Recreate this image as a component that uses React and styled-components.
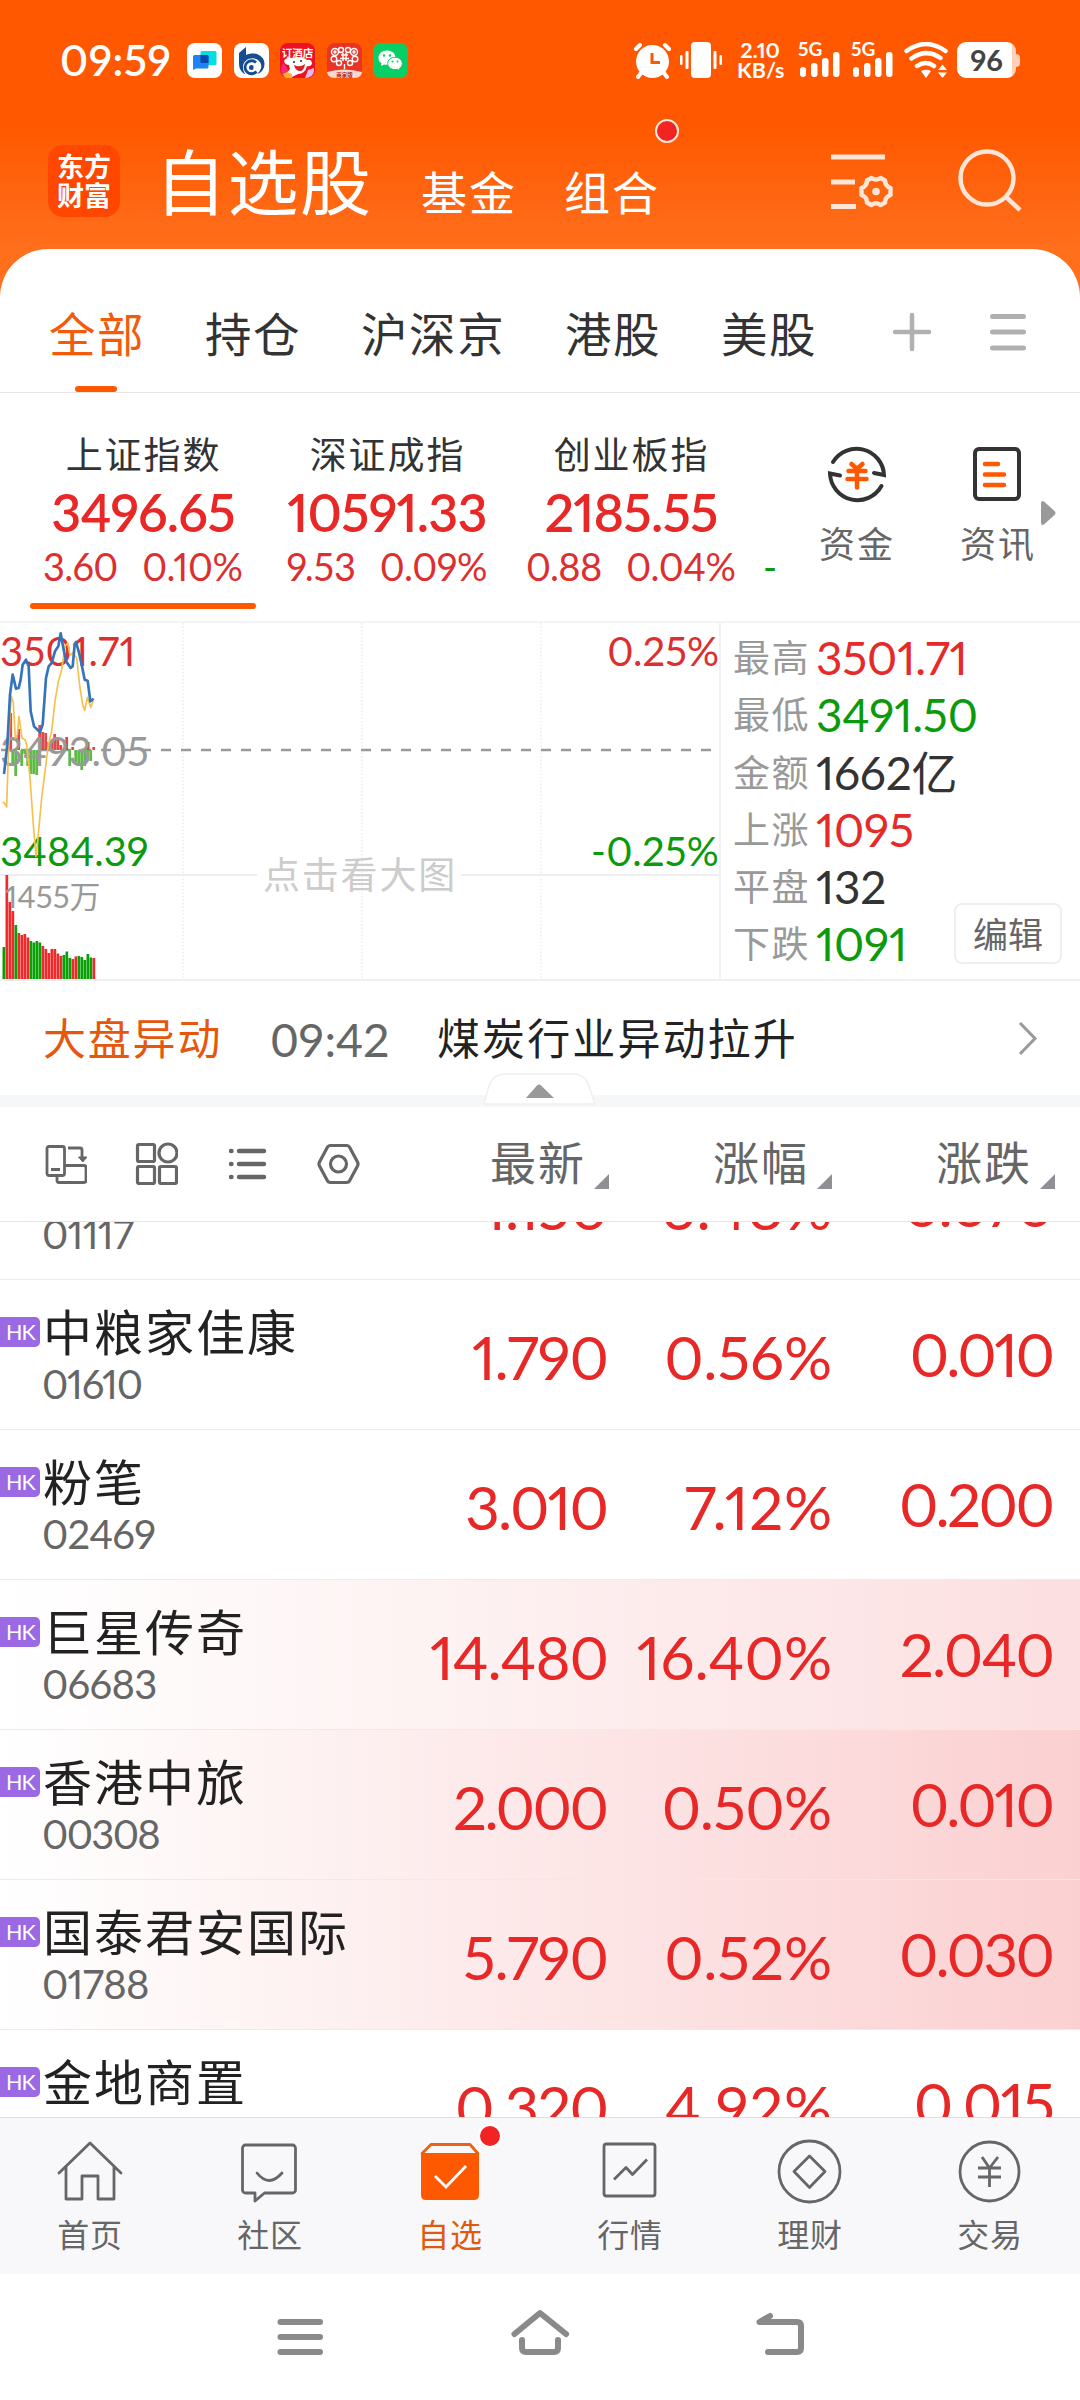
import React from 'react'
import styled, { createGlobalStyle } from 'styled-components'

const GlobalStyle = createGlobalStyle`
  * {
    box-sizing: border-box;
  }
  body {
    margin: 0;
    background: #fff;
  }
  svg {
    display: block;
    flex: none;
  }
`

const RED = '#e82827'
const GREEN = '#0b9a0b'
const ORANGE = '#fe5800'
const GREY = '#666'

const Screen = styled.div`
  display: flex;
  flex-direction: column;
  width: 1080px;
  height: 2400px;
  overflow: hidden;
  background: linear-gradient(#ff5800 125px, #ff6f1c 249px, #ff6f1c 300px, #fff 300px);
  font-family: Lato, 'Noto Sans CJK SC', sans-serif;
  font-variant-numeric: proportional-nums;
  color: #333;
  white-space: nowrap;
`

// the proportional zero is wide, so numbers with many zeros are set tighter
const spacing = text => {
  const zeros = text.split('0').length - 1
  return -0.012 * zeros + (text.endsWith('%') ? 0.012 : -0.006)
}

const Digits = styled.span`
  letter-spacing: ${p => spacing(p.children)}em;
  margin-right: ${p => -spacing(p.children)}em;
`

/* status bar */

const StatusBar = styled.div`
  display: flex;
  align-items: center;
  flex: none;
  height: 120px;
  padding-left: 60px;
  color: #fff;
`
const Clock = styled.div`
  width: 127px;
  font-size: 42.5px;
  font-weight: 600;
  letter-spacing: 0.5px;
  line-height: 42px;
`
const AppIcons = styled.div`
  display: flex;
  gap: 11.6px;
  width: 447px;
`
const Speed = styled.div`
  width: 46px;
  margin: 0 15px 0 14px;
  font-size: 21.5px;
  font-weight: 700;
  line-height: 20px;
  text-align: center;
`
const Signal = styled.div`
  width: 53px;
  height: 36px;
  font-size: 19px;
  font-weight: 700;
  line-height: 14px;
`
const Bars = styled.svg`
  margin: -4px 0 0 2px;
`
const Battery = styled.div`
  display: flex;
  align-items: center;
  margin-left: 9px;
`
const Charge = styled.div`
  width: 59px;
  height: 36px;
  border-radius: 9px;
  background: linear-gradient(90deg, #fff 55px, #ffd0b8 55px);
  color: #444;
  font-size: 29px;
  font-weight: 700;
  line-height: 35px;
  text-align: center;
`
const Tip = styled.div`
  width: 4px;
  height: 13px;
  border-radius: 0 4px 4px 0;
  background: #ffd0b8;
`

/* header */

const Header = styled.div`
  display: flex;
  flex: none;
  height: 129px;
  padding-left: 48px;
  color: #fff;
`
const Logo = styled.div`
  width: 72px;
  height: 72px;
  margin: 25px 35px 0 0;
  padding: 7px 0 0 9px;
  border-radius: 15px;
  background: #ff4700;
  font-size: 27px;
  font-weight: 700;
  line-height: 29px;
`
const Title = styled.h1`
  width: 266px;
  margin: 21px 0 0;
  font-size: 71px;
  font-weight: 400;
  letter-spacing: 1.5px;
  line-height: 82px;
`
const HeaderLink = styled.div`
  position: relative;
  width: 143px;
  padding-top: 43px;
  font-size: 46px;
  letter-spacing: 2px;
  line-height: 60px;
`
const Dot = styled.span`
  position: absolute;
  top: ${p => p.$top}px;
  left: ${p => p.$left}px;
  width: 24px;
  height: 24px;
  border: 2px solid ${p => p.$ring};
  border-radius: 50%;
  background: #f22323;
`
const HeaderIcons = styled.div`
  display: flex;
  gap: 64px;
  margin: 28px 0 0 121px;
`

/* group tabs */

const Tabs = styled.div`
  display: flex;
  flex: none;
  height: 144px;
  padding-left: 49px;
  border-bottom: 1px solid #e4e6e6;
  border-radius: 48px 48px 0 0;
  background: #fff;
`
const Tab = styled.div`
  display: flex;
  flex-direction: column;
  justify-content: space-between;
  width: ${p => p.$width}px;
  padding-top: 55px;
  color: ${p => (p.$active ? '#f25a0c' : '#333')};
  font-size: 46.5px;
  letter-spacing: 1.6px;
  line-height: 60px;
`
const TabMark = styled.div`
  width: 42px;
  height: 6px;
  margin-left: 26px;
  border-radius: 3px;
  background: ${ORANGE};
`
const TabIcons = styled.div`
  display: flex;
  gap: 58px;
  padding: 63px 0 0 1px;
`

/* index strip */

const Indexes = styled.div`
  display: flex;
  flex: none;
  height: 228px;
  padding-left: 30px;
  background: #fff;
`
const Index = styled.div`
  display: flex;
  flex-direction: column;
  align-items: center;
  width: ${p => p.$width}px;
  padding-top: 38px;
`
const IndexName = styled.div`
  padding-left: 1px;
  font-size: 37px;
  letter-spacing: 1.9px;
  line-height: 48px;
`
const IndexValue = styled.div`
  color: ${RED};
  font-size: 52px;
  font-weight: 600;
  letter-spacing: -0.8px;
  line-height: 66px;
`
const IndexChange = styled.div`
  display: flex;
  gap: 24px;
  color: #dc2f2f;
  font-size: 38px;
  line-height: 42px;
`
const IndexMark = styled.div`
  width: 226px;
  height: 6px;
  margin-top: 16px;
  border-radius: 3px;
  background: ${ORANGE};
`
const NextIndex = styled.div`
  width: 74px;
  padding: 152px 0 0 19px;
  color: ${GREEN};
  font-size: 38px;
  line-height: 42px;
`
const Shortcut = styled.div`
  display: flex;
  flex-direction: column;
  align-items: center;
  width: 78px;
  margin-right: ${p => p.$gap}px;
  padding-top: 51px;
  color: ${GREY};
  font-size: 36px;
  letter-spacing: 2px;
  line-height: 48px;
  svg {
    margin-bottom: 16px;
  }
`
const Scroll = styled.svg`
  margin: 107px 0 0 3px;
`

/* market chart */

const Market = styled.div`
  display: flex;
  flex: none;
  height: 360px;
  border-top: 2px solid #f3f4f4;
  border-bottom: 2px solid #f0f0f0;
  background: #fff;
`
const Chart = styled.div`
  position: relative;
  width: 721px;
  border-right: 2px solid #f1f1f1;
`
const ChartText = styled.span`
  position: absolute;
  top: ${p => p.$top}px;
  ${p => (p.$right ? 'right: 0;' : `left: ${p.$left || 0}px;`)}
  color: ${p => p.$color};
  font-size: ${p => p.$size || 40}px;
  line-height: 44px;
  letter-spacing: ${p => p.$ls || 0}px;
`
const Overlay = styled.svg`
  position: absolute;
  top: 0;
  left: 0;
`
const Stats = styled.div`
  width: 233px;
  padding: 6px 0 0 12px;
`
const Stat = styled.div`
  display: flex;
  gap: 8px;
  color: ${p => p.$color};
  font-size: 46px;
  letter-spacing: -0.2px;
  line-height: 57.3px;
`
const StatLabel = styled.span`
  width: 75px;
  color: #999;
  font-size: 37px;
  letter-spacing: 1.4px;
`
const Edit = styled.div`
  align-self: flex-end;
  width: 108px;
  height: 61px;
  margin-bottom: 15px;
  border: 2px solid #efefef;
  border-radius: 8px;
  color: ${GREY};
  font-size: 35px;
  line-height: 58px;
  text-align: center;
`

/* news */

const News = styled.div`
  display: flex;
  flex: none;
  height: 114px;
  padding: 30px 0 0 43px;
  background: #fff;
  color: #222;
  font-size: 43px;
  letter-spacing: 1.8px;
  line-height: 56px;
`
const NewsTag = styled.span`
  width: 228px;
  color: #e5570c;
`
const NewsTime = styled.span`
  width: 166px;
  color: ${GREY};
  font-size: 46.5px;
  font-variant-numeric: tabular-nums;
  letter-spacing: -0.2px;
`
const NewsTitle = styled.span`
  width: 581px;
  letter-spacing: 2.1px;
`
const Divider = styled.div`
  position: relative;
  flex: none;
  height: 12px;
  background: #f5f7f9;
`
const Collapse = styled.svg`
  position: absolute;
  top: -23px;
  left: 483px;
`

/* stock list */

const Columns = `
  display: grid;
  grid-template-columns: 386px 223px 223px 223px;
`
const ListHead = styled.div`
  ${Columns}
  flex: none;
  height: 115px;
  border-bottom: 1px solid #e6e6e6;
  background: #fff;
`
const ViewIcons = styled.div`
  display: flex;
  gap: 47px;
  padding: 34px 0 0 43px;
`
const HeadCell = styled.div`
  display: flex;
  justify-content: flex-end;
  gap: 8px;
  padding-top: 26px;
  color: ${GREY};
  font-size: 46px;
  letter-spacing: 2px;
  line-height: 60px;
  svg {
    margin-top: 41px;
  }
`
const List = styled.div`
  flex: none;
  height: 895px;
  overflow: hidden;
  background: #fff;
`
const Rows = styled.div`
  margin-top: -92px;
`
const Row = styled.div`
  ${Columns}
  height: 150px;
  padding-top: 22px;
  border-bottom: 1px solid #ebebeb;
  background: linear-gradient(90deg, #fff, ${p => p.$tint || '#fff'});
`
const NameLine = styled.div`
  display: flex;
  align-items: center;
  gap: 3px;
  color: #222;
  font-size: 49px;
  letter-spacing: 2px;
  line-height: 60px;
`
const Badge = styled.span`
  width: 40px;
  height: 30px;
  padding-left: 6px;
  border-radius: 0 5px 5px 0;
  background: #9b69e4;
  color: #fff;
  font-size: 21.5px;
  letter-spacing: -1px;
  line-height: 30px;
`
const Code = styled.div`
  padding-left: 42px;
  color: ${GREY};
  font-size: 40px;
  line-height: 45px;
`
const Value = styled.div`
  padding-top: ${p => (p.$last ? 16 : 19)}px;
  color: ${RED};
  font-size: 60px;
  line-height: 72px;
  text-align: right;
`

/* bottom bars */

const TabBar = styled.div`
  display: flex;
  flex: none;
  height: 157px;
  border-top: 1px solid #dfdfe2;
  background: #f8f8fa;
`
const TabItem = styled.div`
  position: relative;
  display: flex;
  flex-direction: column;
  align-items: center;
  width: 180px;
  padding-top: 20px;
  color: ${p => (p.$active ? '#e0590f' : GREY)};
  font-size: 32px;
  letter-spacing: 0.8px;
  line-height: 48px;
  svg {
    margin-bottom: 7px;
  }
`
const SystemBar = styled.div`
  display: flex;
  flex: 1;
  gap: 180px;
  padding: 31px 0 0 270px;
  background: #fff;
`

const indexes = [
  { name: '上证指数', value: '3496.65', change: '3.60', pct: '0.10%', width: 226, active: true },
  { name: '深证成指', value: '10591.33', change: '9.53', pct: '0.09%', width: 262 },
  { name: '创业板指', value: '2185.55', change: '0.88', pct: '0.04%', width: 226 }
]

const stats = [
  ['最高', '3501.71', '#e52a2a'],
  ['最低', '3491.50', GREEN],
  ['金额', '1662亿', '#333'],
  ['上涨', '1095', '#e52a2a'],
  ['平盘', '132', '#333'],
  ['下跌', '1091', GREEN]
]

const stocks = [
  { name: '现代牧业', code: '01117', price: '1.150', pct: '6.48%', diff: '0.070' },
  { name: '中粮家佳康', code: '01610', price: '1.790', pct: '0.56%', diff: '0.010' },
  { name: '粉笔', code: '02469', price: '3.010', pct: '7.12%', diff: '0.200' },
  { name: '巨星传奇', code: '06683', price: '14.480', pct: '16.40%', diff: '2.040', tint: '#fcdfe0' },
  { name: '香港中旅', code: '00308', price: '2.000', pct: '0.50%', diff: '0.010', tint: '#fbd0d1' },
  { name: '国泰君安国际', code: '01788', price: '5.790', pct: '0.52%', diff: '0.030', tint: '#fbd0d1' },
  { name: '金地商置', code: '00535', price: '0.320', pct: '4.92%', diff: '0.015' }
]

// bar tops measured down from the top of the chart
const volumes = [
  ['g', 325], ['r', 253], ['r', 280], ['r', 289], ['g', 303], ['r', 311], ['r', 313], ['r', 312],
  ['r', 315.5], ['g', 319], ['g', 320.5], ['g', 319], ['g', 320.5], ['r', 324], ['r', 327], ['r', 331],
  ['r', 327], ['r', 327], ['r', 331.5], ['r', 334], ['g', 333], ['g', 329.5], ['g', 336], ['r', 337],
  ['r', 334.5], ['g', 334], ['g', 335], ['g', 338], ['g', 332], ['g', 335.5], ['r', 336]
]

// [x, height], negative goes up from the baseline
const flows = [
  [9.3, -37], [14.3, 26], [11.3, 14], [17.3, -21], [20.3, 16], [23.3, 4], [26.3, 16], [29.3, 24], [32.3, 24], [35.3, 25],
  [38.3, -25], [41.3, -18], [44.3, -17], [47.3, -8], [50.3, -8], [53.3, -16], [56.3, -11], [59.3, -5],
  [65.3, -13], [68.3, 16], [71.3, -3], [74.3, 12], [77.3, 16], [80.3, 20], [83.3, 16], [86.3, 10], [86.8, -8], [89.3, 11], [92.3, -3]
]

const AppIcon = ({ bg, children }) => (
  <svg width="35" height="35" viewBox="0 0 35 35">
    <rect width="35" height="35" rx="8" fill={bg} />
    {children}
  </svg>
)

const SignalBars = ({ children }) => (
  <Signal>
    {children}
    <Bars width="42" height="26" viewBox="0 0 42 26" fill="#fff">
      <rect x="0" y="15" width="6" height="10" rx="3" />
      <rect x="11" y="11" width="6.5" height="14" rx="3" />
      <rect x="22" y="6" width="6.5" height="19" rx="3" />
      <rect x="33" y="0" width="6.5" height="25" rx="3" />
    </Bars>
  </Signal>
)

const Status = () => (
  <StatusBar>
    <Clock>09:59</Clock>
    <AppIcons>
      <AppIcon bg="#fff">
        <rect x="13.5" y="8" width="16" height="14" rx="1.5" fill="#06dde0" />
        <path d="M7 12h13a1.5 1.5 0 0 1 1.5 1.5V24a1.5 1.5 0 0 1-1.5 1.5H9L6 27V13.5Z" fill="#1d83f7" />
        <path d="M13.5 12h6.5a1.5 1.5 0 0 1 1.5 1.5V20H15a1.5 1.5 0 0 1-1.5-1.5Z" fill="#0749ac" />
      </AppIcon>
      <AppIcon bg="#fff">
        <path d="M5 10l7-6v8c8-4 18.500 0 18.500 9-.2 5-3 9-7.500 10 5-4 6-10 1-14-6-4-14.500-.5-15 6.500-.1 3 .8 5.500 2.500 8C7 29 5 26 5 20Z" fill="#164c94" />
        <path d="M22 19.500a6.500 6.500 0 1 0 .5 9" fill="none" stroke="#164c94" strokeWidth="2.800" />
        <circle cx="17.500" cy="24.500" r="2.500" fill="#164c94" />
        <path d="M19.500 23h4v3.500h-4Z" fill="#fff" />
      </AppIcon>
      <AppIcon bg="#ee1122">
        <path d="M1 27Q1 22 4 20L9 29 6 34Q1 33 1 27Z" fill="#f22b78" />
        <path d="M4 18Q6 14 13 15 22 12 27 17q5-1 5 4-2 3-5 2-2 8-9 8l-6 3-6-3 4-5-1-4Q5 22 4 18Z" fill="#fff" />
        <text x="17.500" y="14" fill="#fff" fontSize="10.500" fontWeight="700" textAnchor="middle">订酒店</text>
        <path d="M14 22q6 3 11-1-1 8-6 7-4-1-5-6Z" fill="#d9202a" />
        <circle cx="14" cy="19" r="1" fill="#222" />
        <circle cx="21" cy="18" r="1" fill="#222" />
        <path d="M3 31l4-2 5 2v4H7Q4 35 3 31Z" fill="#ffb020" />
        <path d="M25 35l3-8 6-2v3q-1 7-9 7Z" fill="#e9b8ea" />
      </AppIcon>
      <AppIcon bg="#e83327">
        <g fill="none" stroke="#fff" strokeWidth="1.400">
          <circle cx="8" cy="9" r="3.500" />
          <circle cx="8" cy="9" r="1" />
          <circle cx="14" cy="7" r="2.500" />
          <circle cx="21" cy="7" r="2.500" />
          <circle cx="27" cy="9" r="3.500" />
          <circle cx="27" cy="9" r="1" />
          <circle cx="7" cy="16" r="2.800" />
          <circle cx="28" cy="16" r="2.800" />
          <circle cx="12" cy="20" r="2.500" />
          <circle cx="23" cy="20" r="2.500" />
          <path d="M14 12h7M13 15.500h9M16 10v8M19 10v8M17.500 21v5" />
        </g>
        <path d="M0 29Q17 24 35 29v0Q34 35 27 35H8Q1 35 0 29Z" fill="#fbd9d3" />
        <text x="17.500" y="33.500" fill="#b3261c" fontSize="5.500" fontWeight="700" textAnchor="middle">商家版</text>
      </AppIcon>
      <AppIcon bg="#07cf63">
        <path d="M14 7.500c-5 0-8.500 3.200-8.500 7.200 0 2.300 1.100 4.200 3 5.500L8 23l3-1.600c1 .3 2 .4 3 .4 5 0 8.500-3 8.500-7.100s-3.500-7.200-8.500-7.200Z" fill="#fff" />
        <path d="M22 14.300c-4.300 0-7.300 2.700-7.300 6.200 0 3.400 3 6.100 7.300 6.100.9 0 1.700-.1 2.500-.3l2.500 1.400-.5-2.300c1.800-1.200 2.800-2.900 2.800-4.900 0-3.500-3-6.200-7.300-6.200Z" fill="#fff" stroke="#07cf63" />
        <g fill="#07cf63">
          <circle cx="11" cy="12.500" r="1.200" />
          <circle cx="17" cy="12.500" r="1.200" />
          <circle cx="19.500" cy="18.500" r="1" />
          <circle cx="24.500" cy="18.500" r="1" />
        </g>
      </AppIcon>
    </AppIcons>
    <svg width="37" height="37" viewBox="0 0 37 37" fill="none" stroke="#fff" strokeWidth="4" strokeLinecap="round">
      <circle cx="18.500" cy="19.500" r="16.500" fill="#fff" stroke="none" />
      <path d="M2 7l4-4M35 7l-4-4M7 31l-3 4M30 31l3 4" />
      <path d="M18 11v9.500h8" stroke={ORANGE} strokeWidth="3" strokeLinecap="butt" />
    </svg>
    <svg width="52" height="36" viewBox="-9 0 52 36" fill="#fff">
      <rect x="11" y="0" width="20" height="36" rx="4" />
      <rect x="5.500" y="9" width="3" height="18" rx="1" />
      <rect x="0" y="13" width="2.500" height="10" rx="1" />
      <rect x="33.500" y="9" width="3" height="18" rx="1" />
      <rect x="39.500" y="13" width="2.500" height="10" rx="1" />
    </svg>
    <Speed>2.10<br />KB/s</Speed>
    <SignalBars>5G</SignalBars>
    <SignalBars>5G</SignalBars>
    <svg width="44" height="36" viewBox="0 0 44 36" fill="none" stroke="#fff" strokeWidth="4.500" strokeLinecap="round">
      <path d="M2.500 9Q22-5 41.500 9M7.500 16.500Q22 6 36.500 16M13 24q9-6 17 0" />
      <path d="M17 29q5-2.500 10 0l-5 7Z M34 28l4.500-5.500L43 28ZM34 30.500l4.500 5.500 4.500-5.500Z" fill="#fff" stroke="none" />
    </svg>
    <Battery>
      <Charge>96</Charge>
      <Tip />
    </Battery>
  </StatusBar>
)

const TopHeader = () => (
  <Header>
    <Logo>东方<br />财富</Logo>
    <Title>自选股</Title>
    <HeaderLink>基金</HeaderLink>
    <HeaderLink>
      组合
      <Dot $top={-1} $left={91} $ring="#ffe9dd" />
    </HeaderLink>
    <HeaderIcons>
      <svg width="66" height="66" viewBox="0 0 66 66" fill="none" stroke="#ffe5d6" strokeWidth="5">
        <path d="M3 9h54M3 34h24M3 58.500h25" />
        <path d="M43.500 30q4.500 3 9 0l4.500 2.500q0 5.500 5.500 7.500v7q-5.500 2-5.500 7.500l-4.500 2.500q-4.500-3.500-9 0l-4.500-2.500q0-5.500-5.500-7.500v-7q5.500-2 5.500-7.500Z" strokeWidth="4.500" strokeLinejoin="round" />
        <circle cx="48" cy="43.500" r="3.800" fill="#ffe5d6" stroke="none" />
      </svg>
      <svg width="66" height="66" viewBox="0 0 66 66" fill="none" stroke="#ffe5d6" strokeWidth="4.500">
        <circle cx="29" cy="30" r="26.500" />
        <path d="M48 49l14 13" />
      </svg>
    </HeaderIcons>
  </Header>
)

const GroupTabs = () => (
  <Tabs>
    <Tab $width={156} $active>
      全部
      <TabMark />
    </Tab>
    <Tab $width={156}>持仓</Tab>
    <Tab $width={204}>沪深京</Tab>
    <Tab $width={156}>港股</Tab>
    <Tab $width={170}>美股</Tab>
    <TabIcons>
      <svg width="40" height="40" viewBox="0 0 40 40" stroke="#b0b0b0" strokeWidth="4.500" strokeLinecap="round">
        <path d="M3 20h34M20 3v34" />
      </svg>
      <svg width="40" height="40" viewBox="0 0 40 40" stroke="#b0b0b0" strokeWidth="5" strokeLinecap="round">
        <path d="M2.500 4.500h31M2.500 20h31M2.500 36h31" />
      </svg>
    </TabIcons>
  </Tabs>
)

const IndexStrip = () => (
  <Indexes>
    {indexes.map(i => (
      <Index key={i.name} $width={i.width}>
        <IndexName>{i.name}</IndexName>
        <IndexValue>{i.value}</IndexValue>
        <IndexChange>
          <Digits>{i.change}</Digits>
          <Digits>{i.pct}</Digits>
        </IndexChange>
        {i.active && <IndexMark />}
      </Index>
    ))}
    <NextIndex>-</NextIndex>
    <Shortcut $gap={63}>
      <svg width="60" height="60" viewBox="0 0 60 60" fill="none" stroke="#333" strokeWidth="4" strokeLinecap="round">
        <path d="M6 18A27.500 27.500 0 0 1 57 31l-10-2" />
        <path d="M13 31.500L3 29.500A27.500 27.500 0 0 0 54.500 42" />
        <path d="M24.500 20l5.500 5 5.500-5M21.500 27h17M20.500 35h19M30 26v17.500" stroke={ORANGE} strokeWidth="4.500" />
      </svg>
      资金
    </Shortcut>
    <Shortcut $gap={0}>
      <svg width="60" height="60" viewBox="0 0 60 60" fill="none" stroke="#333" strokeWidth="4" strokeLinecap="round">
        <rect x="7" y="5" width="44" height="50" rx="4" />
        <path d="M17 20h13M17 30.500h19M17 41h19" stroke={ORANGE} strokeWidth="4.500" />
      </svg>
      资讯
    </Shortcut>
    <Scroll width="17" height="26" viewBox="0 0 17 26">
      <path d="M1 3.500Q1 0 4 1.500L14.500 11q2 2 0 4L4 24.500Q1 26 1 22.500Z" fill="#999" />
    </Scroll>
  </Indexes>
)

const ChartLines = () => (
  <Overlay width="110" height="260" viewBox="0 35 330 780" fill="none" strokeLinejoin="round">
    <path d="M8 572L13 575 20 587 25 430 30 310 34 255 40 275 46 380 52 370 57 315 66 380 75 385 80 400 90 500 100 640 108 735 113 690 125 560 135 480 145 400 155 360 165 270 175 210 185 175 195 105 203 95 210 132 218 125 230 140 240 230 248 280 254 297 262 258 272 288 280 268" stroke="#f7c04c" strokeWidth="5" />
    <path d="M12 488L22 400 30 250 38 190 48 232 56 230 62 205 68 160 78 145 86 165 92 300 102 345 112 355 120 362 128 340 138 200 146 165 155 155 165 120 175 105 182 66 190 110 198 150 212 170 218 165 224 100 228 92 236 120 246 165 254 205 263 208 271 270 281 262" stroke="#3574bb" strokeWidth="8" />
  </Overlay>
)

const MarketChart = () => (
  <Market>
    <Chart>
      <svg width="719" height="356" viewBox="0 1 719 356" fill="none">
        <path d="M183 1v356M362 1v356M541 1v356" stroke="#ececec" strokeWidth="1.500" strokeDasharray="1.500 2" />
        <path d="M0 253h257M461 253h258" stroke="#eee" strokeWidth="2" />
        <path d="M1 128h712" stroke="#999" strokeWidth="2.500" strokeDasharray="10 10" />
        {flows.map(([x, h], i) => (
          <rect key={i} x={x} y={h < 0 ? 128 + h : 128} width="2.800" height={Math.abs(h)} fill={h < 0 ? '#e2494a' : '#5dbb46'} />
        ))}
        {volumes.map(([c, y], i) => (
          <rect key={i} x={2.5 + i * 3} y={y} width="2.700" height={357 - y} fill={c === 'r' ? '#ee2a2a' : '#07a007'} />
        ))}
      </svg>
      <ChartText $top={6} $ls={0.4} $color="#dc3030">3501.71</ChartText>
      <ChartText $top={106} $color="#999">3493.05</ChartText>
      <ChartText $top={206} $color={GREEN}>3484.39</ChartText>
      <ChartText $top={251} $left={5} $size={31} $color="#999">1455万</ChartText>
      <ChartText $top={6} $right $color="#dc3030">0.25%</ChartText>
      <ChartText $top={206} $right $ls={0.2} $color={GREEN}>-0.25%</ChartText>
      <ChartText $top={230} $left={263} $size={37} $ls={1.8} $color="#ccc">点击看大图</ChartText>
      <ChartLines />
    </Chart>
    <Stats>
      {stats.map(([label, value, color]) => (
        <Stat key={label} $color={color}>
          <StatLabel>{label}</StatLabel>
          {value}
        </Stat>
      ))}
    </Stats>
    <Edit>编辑</Edit>
  </Market>
)

const HeadLabel = ({ children }) => (
  <HeadCell>
    {children}
    <svg width="15" height="15" viewBox="0 0 15 15">
      <path d="M15 0v15H0Z" fill="#8f8f96" />
    </svg>
  </HeadCell>
)

const StockList = () => (
  <>
    <ListHead>
      <ViewIcons>
        <svg width="44" height="44" viewBox="0 0 44 44" fill="none" stroke="#666" strokeWidth="2.800" strokeLinejoin="round">
          <rect x="4" y="5.500" width="17.500" height="29" rx="2" />
          <path d="M8 28.500h9M14 35v4.500a2 2 0 0 0 2 2h25a2 2 0 0 0 2-2v-13a2 2 0 0 0-2-2H22M25 7h12a2 2 0 0 1 2 2v8" />
          <path d="M35.500 16h8.500l-4.200 5Z" fill="#666" strokeWidth="1" />
        </svg>
        <svg width="44" height="44" viewBox="0 0 44 44" fill="none" stroke="#666" strokeWidth="3.200">
          <rect x="3.500" y="3.500" width="17" height="17" rx="1.500" />
          <circle cx="34" cy="12" r="9" />
          <rect x="3.500" y="25.500" width="17" height="17" rx="1.500" />
          <rect x="25.500" y="25.500" width="17" height="17" rx="1.500" />
        </svg>
        <svg width="44" height="44" viewBox="0 0 44 44" fill="none" stroke="#666" strokeWidth="4.400" strokeLinecap="round">
          <path d="M14 10h25M14 23h25M14 36h25M6 10h.5M6 23h.5M6 36h.5" />
        </svg>
        <svg width="44" height="44" viewBox="0 0 44 44" fill="none" stroke="#666" strokeWidth="3.200" strokeLinejoin="round">
          <path d="M14.500 4.500h16q2.500 0 3.500 2.500l7.500 14q1 2 0 4l-7.500 14q-1 2.500-3.500 2.500h-16q-2.500 0-3.500-2.500L3.500 25q-1-2 0-4L11 7q1-2.500 3.500-2.500Z" />
          <circle cx="22.500" cy="23" r="8" />
        </svg>
      </ViewIcons>
      <HeadLabel>最新</HeadLabel>
      <HeadLabel>涨幅</HeadLabel>
      <HeadLabel>涨跌</HeadLabel>
    </ListHead>
    <List>
      <Rows>
        {stocks.map(s => (
          <Row key={s.code} $tint={s.tint}>
            <div>
              <NameLine>
                <Badge>HK</Badge>
                {s.name}
              </NameLine>
              <Code><Digits>{s.code}</Digits></Code>
            </div>
            <Value><Digits>{s.price}</Digits></Value>
            <Value><Digits>{s.pct}</Digits></Value>
            <Value $last><Digits>{s.diff}</Digits></Value>
          </Row>
        ))}
      </Rows>
    </List>
  </>
)

const NavIcon = ({ children }) => (
  <svg width="66" height="66" viewBox="0 0 66 66" fill="none" stroke="#666" strokeWidth="2.800" strokeLinejoin="round" strokeLinecap="round">
    {children}
  </svg>
)

const Nav = () => (
  <TabBar>
    <TabItem>
      <NavIcon>
        <path d="M2 35L33 5l31 30M9 29v32h16V38h16v23h16V29" />
      </NavIcon>
      首页
    </TabItem>
    <TabItem>
      <NavIcon>
        <path d="M8.500 7h47a3 3 0 0 1 3 3v42a3 3 0 0 1-3 3H27.500L18 63v-8H8.500a3 3 0 0 1-3-3V10a3 3 0 0 1 3-3Z" />
        <path d="M20 35q12 15 25 0" />
      </NavIcon>
      社区
    </TabItem>
    <TabItem $active>
      <NavIcon>
        <path d="M5 15.500L14 6.500h39l8 9" stroke="#e9621a" />
        <path d="M4 15h58v42q0 5-5 5H9q-5 0-5-5Z" fill={ORANGE} stroke="none" />
        <path d="M18 38l11 11 20-21" stroke="#fff" strokeLinecap="butt" strokeLinejoin="miter" />
      </NavIcon>
      自选
      <Dot $top={6} $left={118} $ring="#fff" />
    </TabItem>
    <TabItem>
      <NavIcon>
        <rect x="7" y="6" width="51" height="52" rx="2.500" />
        <path d="M18 40.500L29 29.500l6.500 7L49 22.500" strokeLinecap="square" />
      </NavIcon>
      行情
    </TabItem>
    <TabItem>
      <NavIcon>
        <circle cx="32.500" cy="33.500" r="30.500" />
        <path d="M32.500 18L48 33.500 32.500 49.500 17 33.500Z" />
      </NavIcon>
      理财
    </TabItem>
    <TabItem>
      <NavIcon>
        <circle cx="32.500" cy="33.500" r="29.500" />
        <path d="M25 19l7.500 11L41 19M21 30h23M21 39h23M32.500 30v19" strokeLinecap="butt" />
      </NavIcon>
      交易
    </TabItem>
  </TabBar>
)

const SystemNav = () => (
  <SystemBar>
    <svg width="60" height="60" viewBox="0 0 60 60" stroke="#8a8a8a" strokeWidth="6" strokeLinecap="round">
      <path d="M10.500 17h39.500M10.500 32h39.500M10.500 47h39.500" />
    </svg>
    <svg width="60" height="60" viewBox="0 0 60 60" fill="none" stroke="#8a8a8a" strokeWidth="6" strokeLinecap="round" strokeLinejoin="round">
      <path d="M4.500 29L30 8l26 21M12 35v8q0 4 4 4h28q4 0 4-4v-8" />
    </svg>
    <svg width="60" height="60" viewBox="0 0 60 60" fill="none" stroke="#8a8a8a" strokeWidth="6" strokeLinecap="round" strokeLinejoin="round">
      <path d="M20 11L9.500 17H47q4 0 4 4v22q0 4-4 4H18" />
    </svg>
  </SystemBar>
)

const App = () => (
  <>
    <GlobalStyle />
    <Screen>
      <Status />
      <TopHeader />
      <GroupTabs />
      <IndexStrip />
      <MarketChart />
      <News>
        <NewsTag>大盘异动</NewsTag>
        <NewsTime>09:42</NewsTime>
        <NewsTitle>煤炭行业异动拉升</NewsTitle>
        <svg width="20" height="56" viewBox="0 0 20 56" fill="none" stroke="#999" strokeWidth="3">
          <path d="M2 12l15 15.500L2 43" />
        </svg>
      </News>
      <Divider>
        <Collapse width="114" height="34" viewBox="0 0 114 34">
          <path d="M1 32L6 14Q10 2 22 2h68q12 0 16 12l6 18Z" fill="#fff" stroke="#eeeff1" strokeWidth="1.500" />
          <path d="M43 26L54 13.500q2-2 4 0L71 26Z" fill="#999" />
        </Collapse>
      </Divider>
      <StockList />
      <Nav />
      <SystemNav />
    </Screen>
  </>
)

export default App
